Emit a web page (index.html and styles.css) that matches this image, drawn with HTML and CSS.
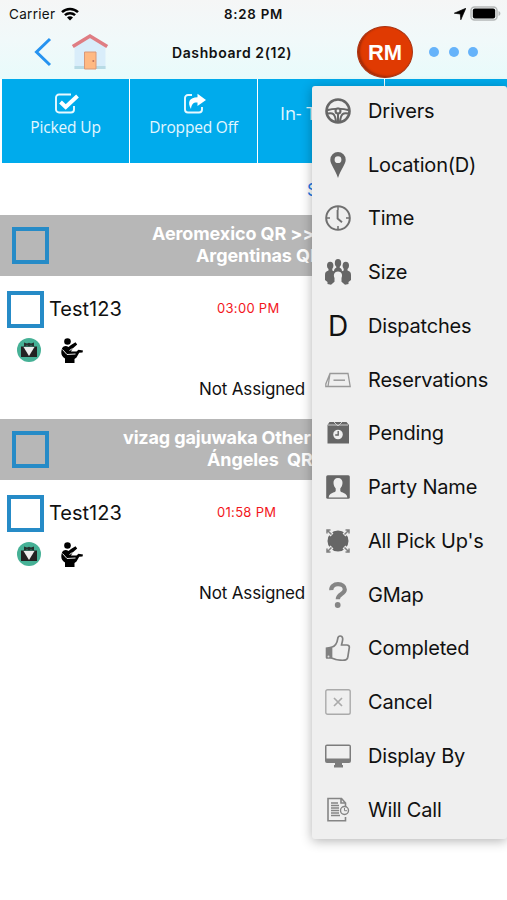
FILE: index.html
```html
<!DOCTYPE html>
<html lang="en">
<head>
<meta charset="utf-8">
<title>Dashboard</title>
<link rel="stylesheet" href="styles.css">
</head>
<body>
<svg class="defs" aria-hidden="true">
  <symbol id="tux" viewBox="0 0 24 24">
    <circle cx="12" cy="12" r="12" fill="#46b196"/>
    <path d="M4 8.500h16v10.500H4z" fill="#222"/>
    <path d="M6.500 9h11L12 18z" fill="#eee"/>
    <path d="M7 4.500l3 1 2-.8 2 .8 3-1v4l-3-1-2 .7-2-.7-3 1z" fill="#26322f"/>
  </symbol>
  <symbol id="seated" viewBox="0 0 22 25">
    <circle cx="6.500" cy="3.500" r="3.300"/>
    <path d="M1.200 10C2.500 7.500 5.500 7.300 7.500 9L10 7l4.500-2.700 1.700 2.200-4.500 4-1.700 3h5.500l2-1.800 4.500.8-.5 2-3.300.3-2.700 4.700-2 1.500v4H4v-4.500C0 18.500-.5 14 1.200 10z"/>
    <path d="M1.500 11.500l4.500 5 8.500-.5M8.500 12.500l3-2" fill="none" stroke="#fff" stroke-width=".9"/>
  </symbol>
</svg>
<div class="screen">
  <header class="top">
    <div class="status">
      <div class="carrier"><span>Carrier</span>
        <svg width="18" height="14" viewBox="0 0 18 14"><g fill="none" stroke="#000" stroke-width="2.500"><path d="M1 5.200a11.500 11.500 0 0 1 16 0"/><path d="M3.900 8.200a7.400 7.400 0 0 1 10.200 0"/></g><path d="M9 13.500L6 10.500a4.200 4.200 0 0 1 6 0z"/></svg>
      </div>
      <div class="clock">8:28 PM</div>
      <div class="power">
        <svg width="12" height="12" viewBox="0 0 12 12"><path d="M11.800.3L6.800 11.800 6.300 6 .3 5.200z" stroke="#000" stroke-width=".7"/></svg>
        <svg width="31" height="15" viewBox="0 0 31 15"><rect x="1" y="1" width="26" height="13" rx="3.500" fill="none" stroke="#b5b8b8" stroke-width="1.500"/><rect x="2.800" y="2.600" width="22.400" height="9.800" rx="2"/><path d="M28.500 5c2.500 1 2.500 4 0 5z" fill="#b5b8b8"/></svg>
      </div>
    </div>
    <nav class="nav">
      <svg class="back" width="18" height="30" viewBox="0 0 18 30"><path d="M16 2L2.500 15 16 28" fill="none" stroke="#2693f0" stroke-width="3"/></svg>
      <svg class="home" width="38" height="38" viewBox="0 0 38 38"><path d="M3.500 13L19 3l15.500 10v23h-31z" fill="#d9edfa"/><path d="M3.500 33h31v3h-31z" fill="#b8dbe5"/><path d="M1.800 13.500L19 3l17.200 10.500" fill="none" stroke="#df7d83" stroke-width="3.600"/><path d="M13.500 19h11.500v17H13.500z" fill="#ffb982" stroke="#d99878" stroke-width="1"/><circle cx="22.300" cy="28" r="1" fill="#bd735d"/></svg>
      <h1 class="title">Dashboard 2(12)</h1>
      <div class="avatar">RM</div>
      <div class="dots"><i></i><i></i><i></i></div>
    </nav>
  </header>

  <div class="tabs">
    <div class="tab"><svg width="26" height="22" viewBox="0 0 26 22"><path d="M20 13v3.500a3 3 0 0 1-3 3H5a3 3 0 0 1-3-3V4.500a3 3 0 0 1 3-3h12" fill="none" stroke="#e8f9ff" stroke-width="1.900"/><path d="M6.500 9l5.200 5L23.500 3" fill="none" stroke="#fff" stroke-width="4"/></svg><span>Picked Up</span></div>
    <div class="tab"><svg width="26" height="22" viewBox="0 0 26 22"><path d="M10 2H6a3 3 0 0 0-3 3v11.500a3 3 0 0 0 3 3h11a3 3 0 0 0 3-3V14" fill="none" stroke="#e8f9ff" stroke-width="1.900"/><path d="M15.500.8L24 7l-8.500 6V9.500c-4-.3-6 1.500-6.500 6.500C5 9 7.500 4.300 15.500 4.200z" fill="#fff"/></svg><span>Dropped Off</span></div>
    <div class="tab tab-plain"><span>In- T</span></div>
    <div class="tab"></div>
  </div>
  <div class="filter">S</div>

  <section>
    <div class="group"><i class="box"></i><div class="route"><p class="r1">Aeromexico QR &gt;&gt;</p><p class="r2">Argentinas QR</p></div></div>
    <article class="trip">
      <div class="line"><i class="box"></i><span class="name">Test123</span><time>03:00 PM</time></div>
      <div class="badges"><svg width="24" height="24"><use href="#tux"/></svg><svg width="22" height="25"><use href="#seated"/></svg></div>
      <div class="assign">Not Assigned</div>
    </article>
  </section>
  <section>
    <div class="group"><i class="box"></i><div class="route"><p class="r3">vizag gajuwaka Other</p><p class="r4">Ángeles&nbsp; QR</p></div></div>
    <article class="trip">
      <div class="line"><i class="box"></i><span class="name">Test123</span><time>01:58 PM</time></div>
      <div class="badges"><svg width="24" height="24"><use href="#tux"/></svg><svg width="22" height="25"><use href="#seated"/></svg></div>
      <div class="assign">Not Assigned</div>
    </article>
  </section>

  <ul class="menu">
    <li><svg viewBox="0 0 26 26"><circle cx="13" cy="13" r="11.500" fill="none" stroke="#666" stroke-width="2.600"/><path d="M2 12.200c6-2 16-2 22 0M3 15.500c5-1 7 .5 8 8M23 15.500c-5-1-7 .5-8 8M13 14v10" fill="none" stroke="#666" stroke-width="2"/><circle cx="13" cy="13" r="3.500" fill="#666"/><circle cx="13" cy="13" r="1.400" fill="#eee"/></svg>Drivers</li>
    <li><svg viewBox="0 0 26 26"><path fill-rule="evenodd" d="M13 0a7.700 7.700 0 0 0-7.700 7.700C5.300 12 10 17 13 26c3-9 7.700-14 7.700-18.300A7.700 7.700 0 0 0 13 0zm0 4.300a3.400 3.400 0 1 1 0 6.800 3.400 3.400 0 0 1 0-6.800z" fill="#666"/></svg>Location(D)</li>
    <li><svg viewBox="0 0 26 26"><circle cx="13" cy="13" r="11.800" fill="none" stroke="#707070" stroke-width="2"/><path d="M13 2v3M13 21v3M2 13h3M21 13h3" stroke="#707070" stroke-width="1.500"/><path d="M12.600 5v8.500l4.400 3.800" fill="none" stroke="#707070" stroke-width="1.900"/></svg>Time</li>
    <li><svg viewBox="0 0 26 26"><g fill="#666"><ellipse cx="5.200" cy="6.500" rx="3.200" ry="3.800"/><ellipse cx="20.800" cy="6.500" rx="3.200" ry="3.800"/><ellipse cx="13" cy="4" rx="3.200" ry="3.900"/><path d="M3.500 9h3.800v2.500l1.700.8c0-2 .8-3 2.300-3.500V6h3.400v2.800c1.500.5 2.300 1.500 2.300 3.500l1.700-.8V9h3.800v2.500c2.500.8 3.500 2 3.500 4.500v5l-2.500 2v2l-3.500.8-3.500-3V19c1.500-3.500 0-6.500-3.500-6.500S8 15.500 9.500 19v3.800l-3.500 3L2.500 25v-2L0 21v-5c0-2.500 1-3.700 3.500-4.500z"/></g></svg>Size</li>
    <li><b class="letter">D</b>Dispatches</li>
    <li><svg viewBox="0 0 26 26"><path d="M5 6.500h18l2.200 13H3zM5 6.500L.8 17v2.500H3" fill="none" stroke="#999" stroke-width="1.300"/><path d="M8.500 13.200h11.500" stroke="#999" stroke-width="1.500"/></svg>Reservations</li>
    <li><svg viewBox="0 0 26 26"><path d="M4.500 2h17L24 5v18.500H2.500V5z" fill="#666"/><path d="M3 5h20M9 2l4 4 4-4" fill="none" stroke="#ccc" stroke-width="1"/><circle cx="13" cy="14.500" r="4.800" fill="#eee"/><path d="M13.200 11v4h-3" fill="none" stroke="#666" stroke-width="1.400"/></svg>Pending</li>
    <li><svg viewBox="0 0 26 26"><rect x="1.200" y="1.200" width="23.600" height="23.600" rx="1.500" fill="#666"/><path d="M13 4c-3 0-4.700 2-4.500 5 .2 2.500 1 4 2.200 5.500v2.500c-1 2-6.700 1.500-7 6.500h18.600c-.3-5-6-4.500-7-6.500v-2.500C16.500 13 17.300 11.500 17.500 9c.2-3-1.500-5-4.500-5z" fill="#eee"/></svg>Party Name</li>
    <li><svg viewBox="0 0 26 26"><circle cx="13" cy="13" r="10.500" fill="#666"/><path d="M2 2l5 5M24 2l-5 5M2 24l5-5M24 24l-5-5" stroke="#eee" stroke-width="4"/><path d="M2 2l4.500 4.500M24 2l-4.500 4.500M2 24l4.500-4.500M24 24l-4.500-4.500M2 5.500V2h3.500M20.500 2H24v3.500M2 20.500V24h3.500M20.500 24H24v-3.500" fill="none" stroke="#808080" stroke-width="1.500"/></svg>All Pick Up's</li>
    <li><svg viewBox="0 0 26 26"><path d="M6.300 8.200C6 4.500 9 2.200 13 2.200s6.800 2 6.800 5.200c0 4.800-7 4.300-7 9.800" fill="none" stroke="#858585" stroke-width="4.200"/><circle cx="12.700" cy="23" r="2.900" fill="#858585"/></svg>GMap</li>
    <li><svg viewBox="0 0 26 26"><path d="M6.500 12.300c4-1.300 5.700-4.500 6.200-8.500.3-3.500 4.800-4 5 0 .1 2.500-1 4.500-1.200 6.200h5.200c2 0 3 1.300 2.500 3.200l-1.400 9c-.4 2-1.500 3-3.500 3-4 .2-9-.5-12.800-2.200z" fill="none" stroke="#808080" stroke-width="1.700"/><path d="M.7 12.500l5.800-1v12.300H2c-1 0-1.300-.7-1.300-1.500z" fill="#808080"/><circle cx="3.500" cy="21.500" r="1" fill="#ddd"/></svg>Completed</li>
    <li><svg viewBox="0 0 26 26"><rect x=".8" y=".8" width="24.400" height="24.400" rx="1.800" fill="none" stroke="#aaa" stroke-width="1.400"/><path d="M9 9l8 8M17 9l-8 8" stroke="#aaa" stroke-width="1.700"/></svg>Cancel</li>
    <li><svg viewBox="0 0 26 26"><path fill-rule="evenodd" d="M2 1.500h22a2 2 0 0 1 2 2V18a2 2 0 0 1-2 2h-7v2h1v2.500H9V22h1v-2H2a2 2 0 0 1-2-2V3.500a2 2 0 0 1 2-2zM1.500 3v12.500h23V3z" fill="#7c7c7c"/></svg>Display By</li>
    <li><svg viewBox="0 0 26 26"><path d="M20.500 10V6l-4-4.500H3v22.200h17.500V20M16 1.500V6h4.500" fill="none" stroke="#858585" stroke-width="1.600"/><path d="M6 6h7M6 8.500h8M6 11h8M6 13.500h8M6 16h8M6 18.500h9" stroke="#858585" stroke-width="1.300"/><circle cx="19.500" cy="13.500" r="4" fill="#eee" stroke="#858585" stroke-width="1.400"/><path d="M19.500 11v2.700h2.500" fill="none" stroke="#858585"/></svg>Will Call</li>
  </ul>
</div>
</body>
</html>
```
FILE: styles.css
```css
* { box-sizing: border-box; }
body { margin: 0; background: #fff; color: #111; font-family: Inter, "Liberation Sans", sans-serif; }
.defs { position: absolute; width: 0; height: 0; }
.screen { position: relative; width: 507px; height: 900px; overflow: hidden; }
h1, p, ul { margin: 0; padding: 0; font-weight: inherit; }

.top { height: 79px; background: linear-gradient(#f5f6f6, #f1f9fa 50%, #e8fbfb); }
.status { height: 27px; padding: 0 6px 0 9px; display: grid; grid-template-columns: 215px 1fr auto; align-items: center; font-size: 13.500px; }
.carrier, .power { display: flex; align-items: center; gap: 6px; }
.carrier { letter-spacing: .3px; }
.power { justify-content: flex-end; gap: 4px; }
.clock { font-weight: 600; font-size: 13.300px; letter-spacing: .95px; letter-spacing: .75px; }
.nav { height: 50px; display: flex; align-items: center; }
.back { margin-left: 34px; }
.home { margin-left: 19px; }
.title { width: 123px; margin-left: 63px; font-size: 14px; font-weight: 600; letter-spacing: .6px; white-space: nowrap; }
.avatar { width: 56px; height: 52px; margin-left: 62px; border-radius: 50%; background: #e03a02; border: 1px solid #a93413; box-shadow: inset 2px -1px 2px #a52c08; color: #fff; font: bold 22px/51px "Liberation Sans", sans-serif; text-align: center; }
.dots { display: flex; gap: 9.500px; margin-left: 16px; }
.dots i { width: 10px; height: 10px; border-radius: 50%; background: #66b3fa; }

.tabs { height: 84px; margin-left: 2px; display: grid; grid-template-columns: 127px 127px 126px 1fr; gap: 1px; }
.tab { background: #00abec; color: #e3f7ff; display: flex; flex-direction: column; align-items: center; padding-top: 14px; font: 500 15.500px/20px "Open Sans", sans-serif; letter-spacing: -.1px; }
.tab svg { margin-left: 2px; }
.tab span { margin-top: 2px; white-space: nowrap; }
.tab:nth-child(1) span { letter-spacing: -.15px; }
.tab:nth-child(2) span { letter-spacing: -.2px; }
.tab-plain { align-items: flex-start; padding: 22px 0 0 22px; font-size: 18px; }
.filter { height: 52px; padding: 17px 0 0 307px; color: #2378e8; font-size: 17px; line-height: 21px; }

.group { height: 61px; background: #b7b7b7; display: flex; align-items: center; padding-left: 12px; }
.box { flex: none; width: 37px; height: 37px; border: 4px solid #268bc7; }
.route { color: #fff; font-size: 18px; line-height: 21.500px; font-weight: 700; letter-spacing: -.1px; white-space: nowrap; transform: translateY(-1px); }
.r1 { padding-left: 103px; }
.r2 { padding-left: 147px; }
.r3 { padding-left: 74px; letter-spacing: -.15px; }
.r4 { padding-left: 158px; }
.trip { height: 143px; padding: 14px 0 0 7px; }
.line { height: 38px; display: flex; align-items: center; }
.name { width: 173px; padding-left: 5px; font-size: 20px; }
.line time { color: #f3161c; font-size: 13px; letter-spacing: .3px; transform: translateY(-1px); }
.badges { display: flex; gap: 20px; padding: 10px 0 0 10px; }
.assign { margin: 14px 0 0 192px; font-size: 17px; line-height: 24px; letter-spacing: -.15px; }

.menu { position: absolute; left: 312px; top: 86px; width: 195px; height: 753px; background: #efefef; border-radius: 3px; box-shadow: 0 2px 12px rgba(0, 0, 0, .3); list-style: none; }
.menu li { height: 53.750px; display: flex; align-items: center; gap: 17px; padding-left: 13px; font-size: 20px; letter-spacing: -.2px; transform: translateY(-2px); white-space: nowrap; }
.menu svg, .letter { flex: none; width: 26px; height: 26px; }
.letter { font-weight: 400; font-size: 28px; line-height: 26px; text-align: center; }
```
